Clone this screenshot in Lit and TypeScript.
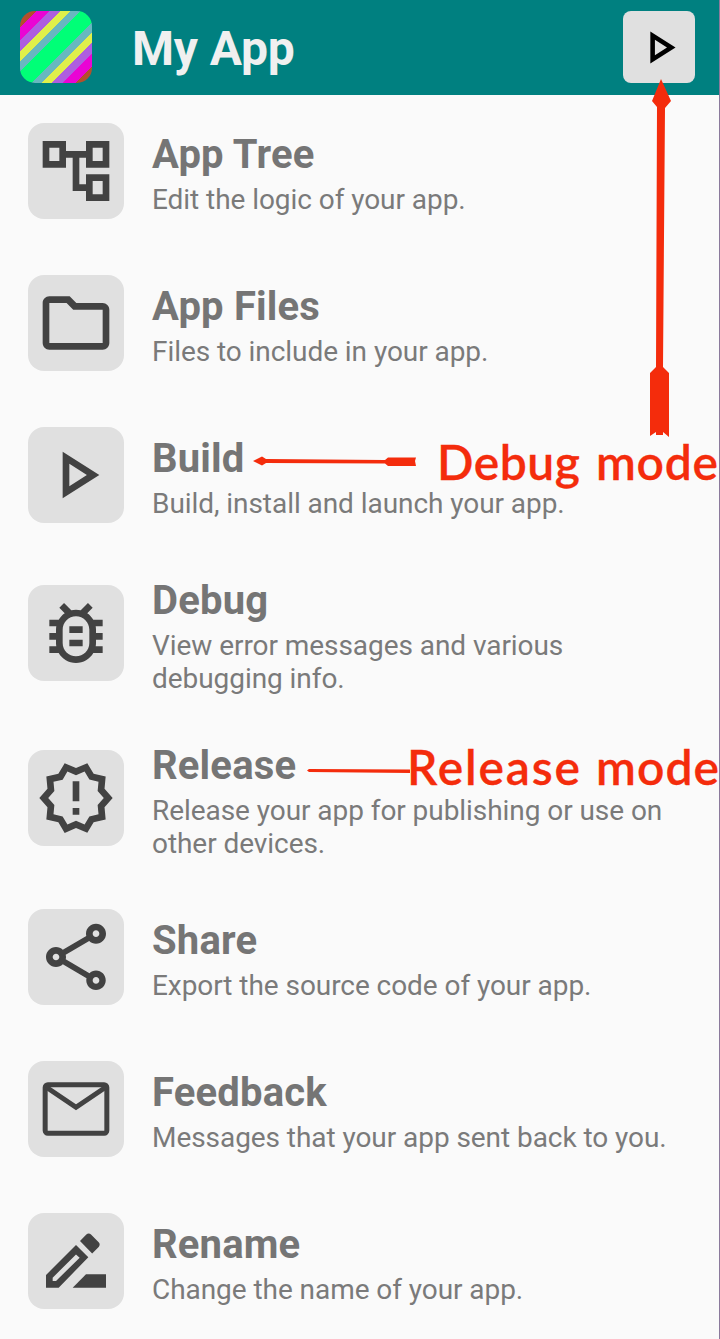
import { LitElement, html, svg, css } from "lit";
import { customElement } from "lit/decorators.js";

const icons = {
  tree: svg`<path d="M22 11V3h-7v3H9V3H2v8h7V8h2v10h4v3h7v-8h-7v3h-2V8h2v3h7zM7 9H4V5h3v4zm10 6h3v4h-3v-4zm0-10h3v4h-3V5z"/>`,
  folder: svg`<path d="M9.17 6l2 2H20v10H4V6h5.17M10.1 4H4c-1.1 0-2 .9-2 2v12c0 1.1.9 2 2 2h16c1.1 0 2-.9 2-2V8c0-1.1-.9-2-2-2h-7.9l-2-2z"/>`,
  play: svg`<path d="M10 8.64L15.27 12 10 15.36V8.64M8 5v14l11-7L8 5z"/>`,
  bug: svg`<path d="M20 8h-2.81c-.45-.78-1.07-1.45-1.82-1.96L17 4.41 15.59 3l-2.17 2.17C12.96 5.06 12.49 5 12 5s-.96.06-1.41.17L8.41 3 7 4.41l1.62 1.63C7.88 6.55 7.26 7.22 6.81 8H4v2h2.09c-.05.33-.09.66-.09 1v1H4v2h2v1c0 .34.04.67.09 1H4v2h2.81c1.04 1.79 2.97 3 5.19 3s4.15-1.21 5.19-3H20v-2h-2.09c.05-.33.09-.66.09-1v-1h2v-2h-2v-1c0-.34-.04-.67-.09-1H20V8zm-4 4v3c0 2.21-1.79 4-4 4s-4-1.79-4-4v-4c0-2.21 1.79-4 4-4s4 1.79 4 4v1zm-6 2h4v2h-4v-2zm0-4h4v2h-4v-2z"/>`,
  release: svg`<path d="M23 12l-2.44-2.78.34-3.68-3.61-.82-1.89-3.18L12 3 8.6 1.54 6.71 4.72l-3.61.81.34 3.68L1 12l2.44 2.78-.34 3.69 3.61.82 1.89 3.18L12 21l3.4 1.46 1.89-3.18 3.61-.82-.34-3.68L23 12zm-4.51 2.11l.26 2.79-2.74.62-1.43 2.41L12 18.82l-2.58 1.11-1.43-2.41-2.74-.62.26-2.8L3.66 12l1.85-2.12-.26-2.78 2.74-.61 1.43-2.41L12 5.18l2.58-1.11 1.43 2.41 2.74.62-.26 2.79L20.34 12l-1.85 2.11zM11 15h2v2h-2zm0-8h2v6h-2z"/>`,
  share: svg`<path d="M18 16.08c-.76 0-1.44.3-1.96.77L8.91 12.7c.05-.23.09-.46.09-.7s-.04-.47-.09-.7l7.05-4.11c.54.5 1.25.81 2.04.81 1.66 0 3-1.34 3-3s-1.34-3-3-3-3 1.34-3 3c0 .24.04.47.09.7L8.04 9.81C7.5 9.31 6.79 9 6 9c-1.66 0-3 1.34-3 3s1.34 3 3 3c.79 0 1.5-.31 2.04-.81l7.12 4.16c-.05.21-.08.43-.08.65 0 1.61 1.31 2.92 2.92 2.92s2.92-1.31 2.92-2.92-1.31-2.92-2.92-2.92zM18 4c.55 0 1 .45 1 1s-.45 1-1 1-1-.45-1-1 .45-1 1-1zM6 13c-.55 0-1-.45-1-1s.45-1 1-1 1 .45 1 1-.45 1-1 1zm12 7.02c-.55 0-1-.45-1-1s.45-1 1-1 1 .45 1 1-.45 1-1 1z"/>`,
  mail: svg`<rect x="2.75" y="4.75" width="18.5" height="14.5" rx="0.8" fill="none" stroke="currentColor" stroke-width="1.5"/><path d="M3 5.4l9 6.1 9-6.1" fill="none" stroke="currentColor" stroke-width="1.5"/>`,
  rename: svg`<path fill-rule="evenodd" d="M3 20v-3.8l9-9 3.7 3.7L6.8 20H3zM5 18h1l7.1-7-1.1-.95-7 6.95v1z"/><path d="M13.2 6l1.9-1.95c.4-.4 1-.4 1.4 0l2.3 2.35c.4.4.4 1 0 1.4L16.85 9.75 13.2 6z"/><path d="M11 20l4-4h6v4H11z"/>`,
};

type IconName = keyof typeof icons;

const glyph = (name: IconName) =>
  html`<svg class="glyph" viewBox="0 0 24 24" fill="currentColor">${icons[name]}</svg>`;

const entries: { icon: IconName; title: string; text: string }[] = [
  { icon: "tree", title: "App Tree", text: "Edit the logic of your app." },
  { icon: "folder", title: "App Files", text: "Files to include in your app." },
  { icon: "play", title: "Build", text: "Build, install and launch your app." },
  { icon: "bug", title: "Debug", text: "View error messages and various debugging info." },
  { icon: "release", title: "Release", text: "Release your app for publishing or use on other devices." },
  { icon: "share", title: "Share", text: "Export the source code of your app." },
  { icon: "mail", title: "Feedback", text: "Messages that your app sent back to you." },
  { icon: "rename", title: "Rename", text: "Change the name of your app." },
];

@customElement("app-root")
export class AppRoot extends LitElement {
  static styles = css`
    :host {
      display: block;
      position: relative;
      box-sizing: border-box;
      width: 720px;
      height: 1339px;
      overflow: hidden;
      background: #fafafa;
      border-right: 1px solid #8b7a9c;
      font-family: Roboto, sans-serif;
      color: #757575;
    }
    .bar {
      display: flex;
      align-items: center;
      box-sizing: border-box;
      height: 95px;
      padding: 0 24px 1px 20px;
      background: #008080;
    }
    .logo {
      width: 72px;
      height: 72px;
      border-radius: 15px;
      background: linear-gradient(135deg,
        #b44f2b 11.8%, #ea04d4 11.8% 20.8%, #ae5ee0 20.8% 27.8%,
        #dff04a 27.8% 35%, #68b7c0 35% 41.7%, #00ff77 41.7% 58.3%,
        #68b7c0 58.3% 65%, #dff04a 65% 72.2%, #ae5ee0 72.2% 79.2%,
        #ea04d4 79.2% 88.2%, #b44f2b 88.2%);
    }
    .name {
      flex: 1;
      margin: 0 0 0 40px;
      padding-top: 3px;
      font-size: 48px;
      line-height: 56px;
      font-weight: 700;
      letter-spacing: -0.15px;
      color: #f0f0f0;
    }
    .run {
      display: grid;
      place-items: center;
      width: 72px;
      height: 72px;
      padding: 0;
      border: 0;
      border-radius: 8px;
      background: #e0e0e0;
      color: #000;
    }
    .run .glyph { width: 55px; height: 55px; }
    .row {
      display: flex;
      align-items: center;
      gap: 28px;
      padding: 21px 28px;
      min-height: 110px;
      box-sizing: content-box;
    }
    .tile {
      flex: none;
      display: grid;
      place-items: center;
      width: 96px;
      height: 96px;
      margin-bottom: 0.2px;
      border-radius: 16px;
      background: #e0e0e0;
      color: #424242;
    }
    .glyph { display: block; width: 80px; height: 80px; }
    .title {
      margin: 0;
      font-size: 40px;
      line-height: 57px;
      font-weight: 700;
      letter-spacing: 0.18px;
    }
    .text {
      margin: 0;
      font-size: 28px;
      line-height: 33px;
      letter-spacing: -0.06px;
      color: #7a7a7a;
    }
    .notes {
      position: absolute;
      left: 0;
      top: 0;
      width: 720px;
      height: 1339px;
      fill: #f42c0c;
      pointer-events: none;
      font-family: Lato, sans-serif;
      font-size: 48px;
      font-weight: 600;
    }
    .notes text {
      stroke: #f42c0c;
      stroke-width: 0.3px;
    }
  `;

  render() {
    return html`
      <header class="bar">
        <div class="logo"></div>
        <h1 class="name">My App</h1>
        <button class="run" aria-label="Run">${glyph("play")}</button>
      </header>
      <main>
        ${entries.map(
          (e) => html`
            <section class="row">
              <div class="tile">${glyph(e.icon)}</div>
              <div>
                <h2 class="title">${e.title}</h2>
                <p class="text">${e.text}</p>
              </div>
            </section>
          `,
        )}
      </main>
      <svg class="notes" viewBox="0 0 720 1339">
        <path d="M661 79l10 22-6 7-2 259 6 6v64l-6-5v3h-7v-3l-6 4v-63l6-6 1-260-5-6z" />
        <path d="M253 461l9-4.500 4 2.500 119 1 3-2.500h28l-1 3.500 1 5h-28l-3-2.500-119-0.500-4 2.500z" />
        <path d="M307 770.500l2-1.500 101 0.500v3.500l-101-1z" />
        <text x="437" y="480" textLength="143">Debug</text>
        <text x="596" y="480" textLength="122">mode</text>
        <text x="407" y="784.500" textLength="173">Release</text>
        <text x="596" y="784.500" textLength="123">mode</text>
      </svg>
    `;
  }
}
